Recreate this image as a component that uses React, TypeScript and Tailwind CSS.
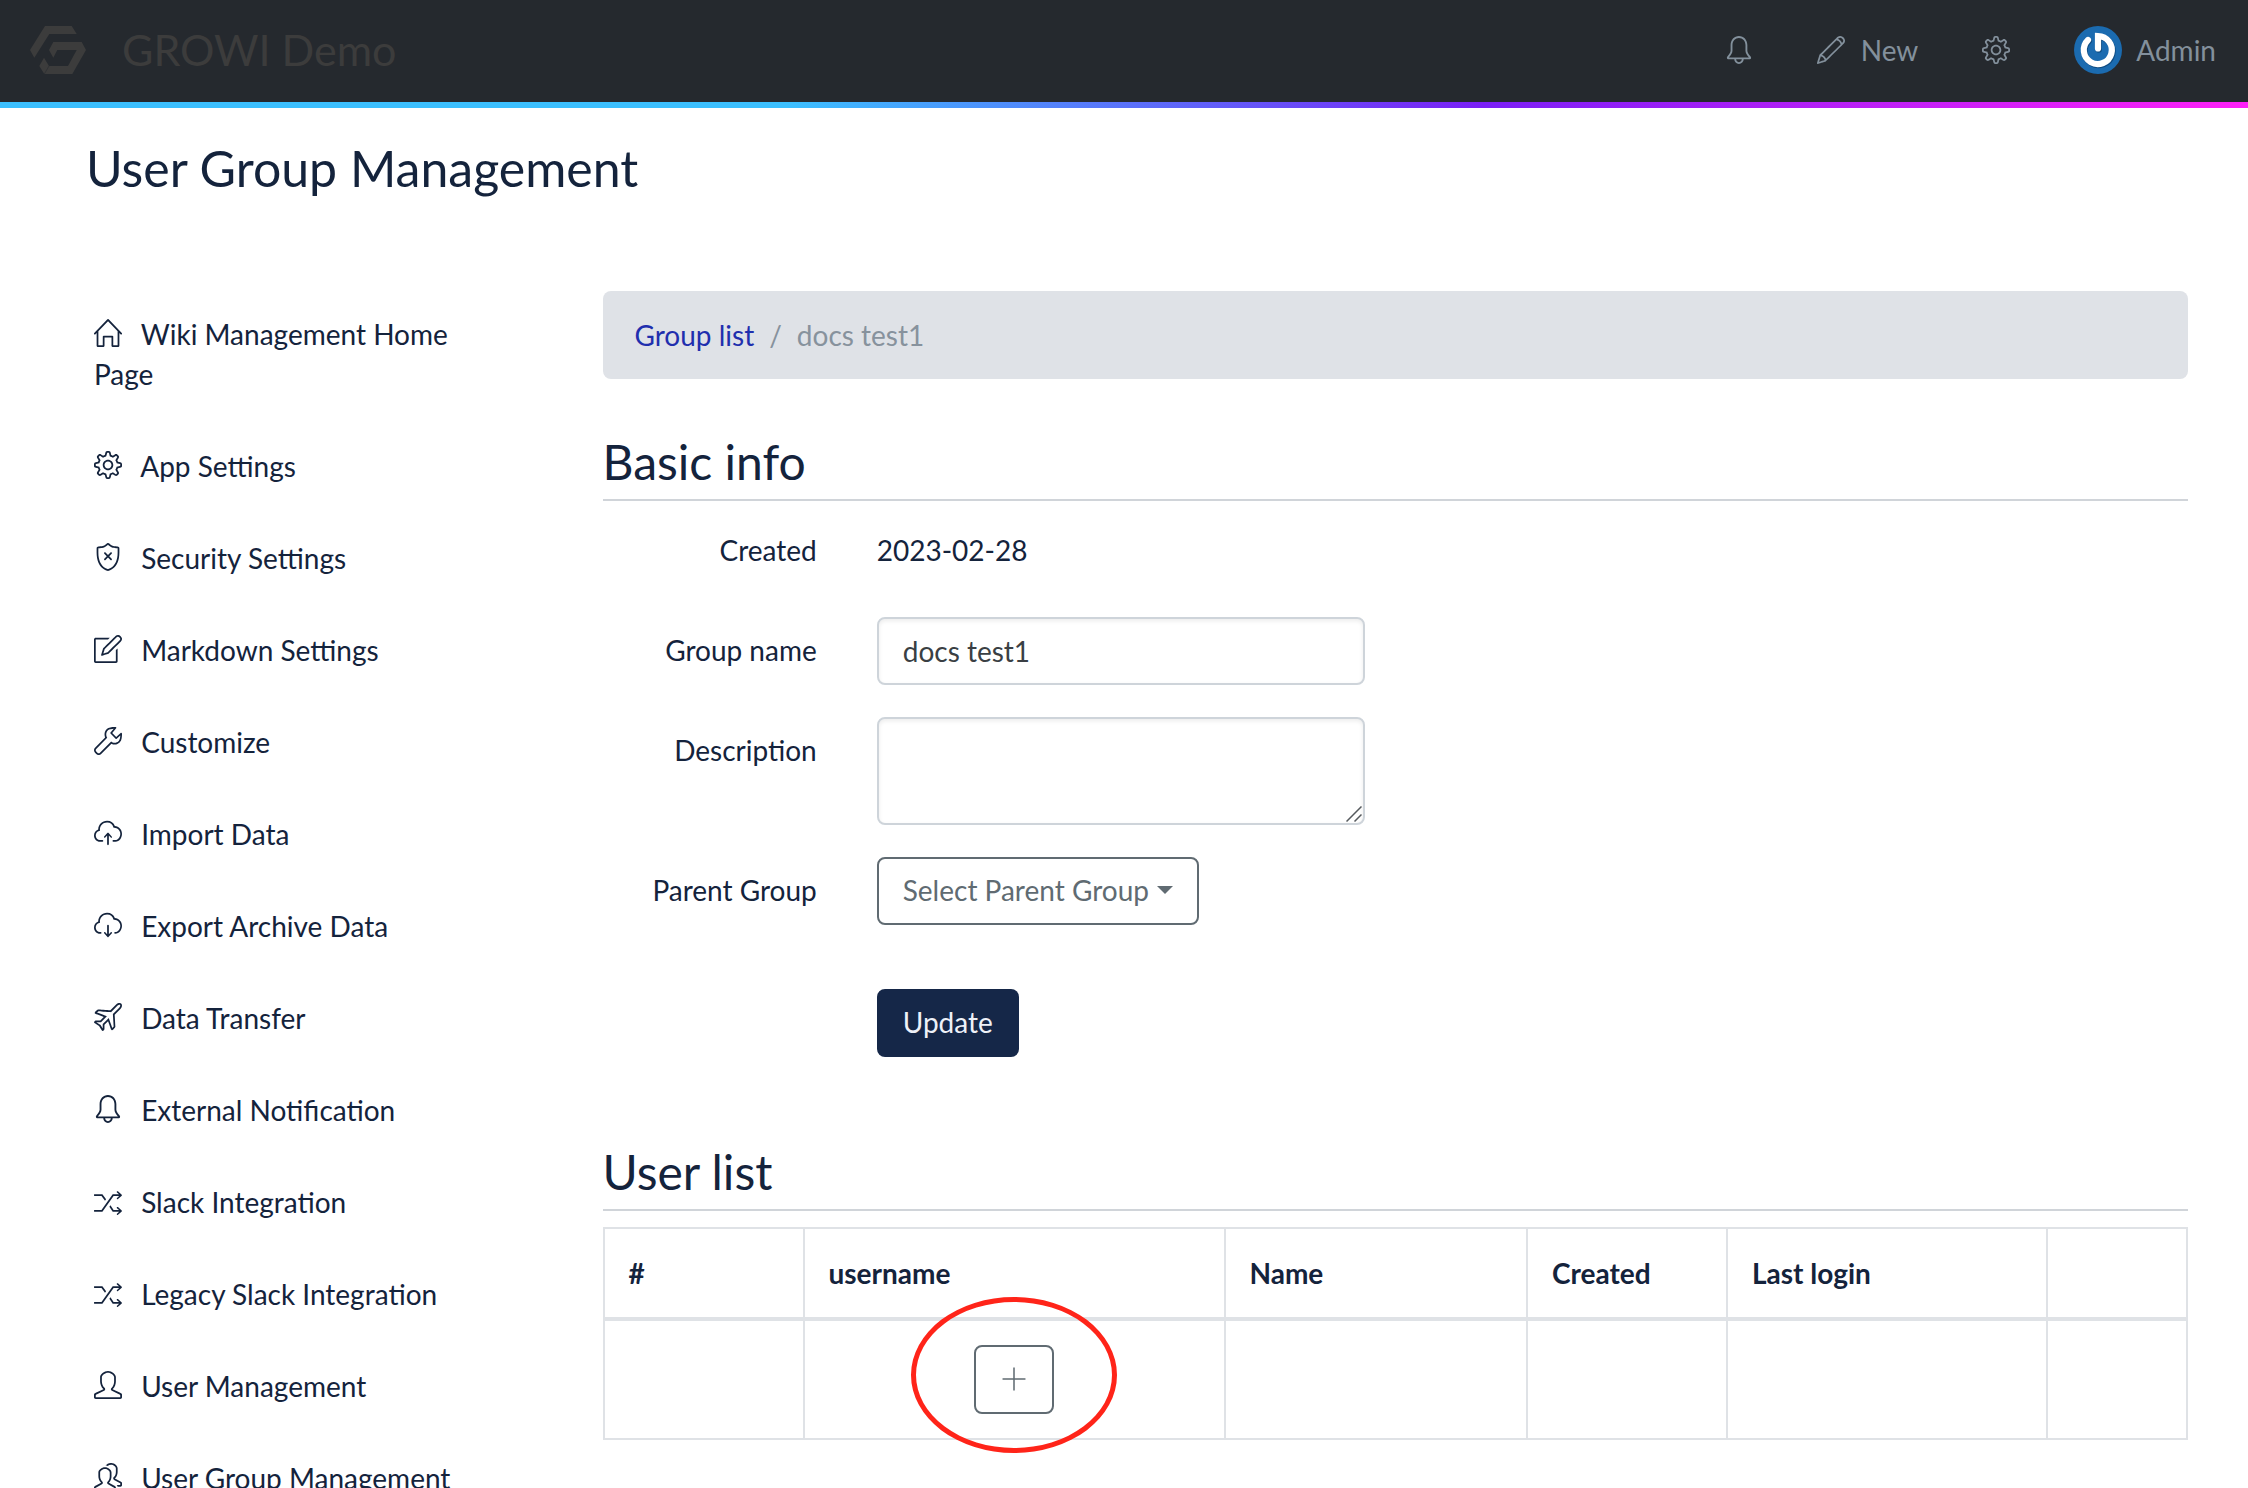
import type { ReactNode } from "react";
import type { IconType } from "react-icons";
import {
  SlBell,
  SlCloudDownload,
  SlCloudUpload,
  SlHome,
  SlNote,
  SlPencil,
  SlPeople,
  SlPlane,
  SlSettings,
  SlShield,
  SlShuffle,
  SlUser,
  SlWrench,
} from "react-icons/sl";
import { TfiPlus } from "react-icons/tfi";

const menu: { icon: IconType; label: string }[] = [
  { icon: SlHome, label: "Wiki Management Home Page" },
  { icon: SlSettings, label: "App Settings" },
  { icon: SlShield, label: "Security Settings" },
  { icon: SlNote, label: "Markdown Settings" },
  { icon: SlWrench, label: "Customize" },
  { icon: SlCloudUpload, label: "Import Data" },
  { icon: SlCloudDownload, label: "Export Archive Data" },
  { icon: SlPlane, label: "Data Transfer" },
  { icon: SlBell, label: "External Notification" },
  { icon: SlShuffle, label: "Slack Integration" },
  { icon: SlShuffle, label: "Legacy Slack Integration" },
  { icon: SlUser, label: "User Management" },
  { icon: SlPeople, label: "User Group Management" },
];

const columns: { label: string; width: string }[] = [
  { label: "#", width: "w-[200px]" },
  { label: "username", width: "w-[421px]" },
  { label: "Name", width: "" },
  { label: "Created", width: "w-[200px]" },
  { label: "Last login", width: "w-[320px]" },
  { label: "", width: "w-[140px]" },
];

function Logo() {
  return (
    <svg viewBox="0 0 56 48" className="h-12 w-14 fill-[#3c3c3c]" aria-hidden="true">
      <path d="M15 0H41.700L46.700 8H19.300L4.300 31.700L0 24Z" />
      <path d="M23.300 16H51.700L56 24L42.300 48H14.300L9.300 40L14 31.700L19 40H38L46.700 24H27.300L23.300 31.700L19 24Z" />
      <path d="M14.300 48L19 40" className="stroke-[#25292e]" strokeWidth="0.500" />
    </svg>
  );
}

function Avatar() {
  return (
    <svg viewBox="0 0 48 48" className="size-12" aria-hidden="true">
      <circle cx="24" cy="24" r="24" fill="#1b6bb0" />
      <g fill="none" strokeLinecap="round">
        <path d="M14 14A14 14 0 1 0 24 10V22.500" transform="translate(0.700 1)" stroke="#0f4c82" strokeWidth="6.500" />
        <path d="M14 14A14 14 0 1 0 24 10V22.500" stroke="#ffffff" strokeWidth="6.200" />
      </g>
    </svg>
  );
}

function Header() {
  return (
    <header>
      <div className="flex h-[102px] items-center bg-[#25292e] pr-8 pb-0.5 pl-[30px] text-[#83909c]">
        <a href="#home" className="flex items-center gap-9 text-[#3c3c3c]">
          <Logo />
          <span className="text-[43px] leading-[52px]">GROWI Demo</span>
        </a>
        <nav className="ml-auto flex items-center gap-16">
          <button type="button" aria-label="Notifications">
            <SlBell className="size-7" />
          </button>
          <button type="button" className="flex items-center gap-4">
            <SlPencil className="size-7" />
            New
          </button>
          <a href="#admin" aria-label="Settings">
            <SlSettings className="size-7" />
          </a>
          <button type="button" className="flex items-center gap-3.5">
            <Avatar />
            Admin
          </button>
        </nav>
      </div>
      <div className="h-1.5 bg-[linear-gradient(90deg,#3cc0ff_0%,#3cc0ff_35%,#7a1ff5_66%,#ff20f8_100%)]" />
    </header>
  );
}

function Sidebar() {
  return (
    <nav className="px-[42px]">
      <ul>
        {menu.map(({ icon: Icon, label }) => (
          <li key={label}>
            <a href="#menu" className="block px-7 py-[26px]">
              <Icon className="mr-3 inline size-7 align-[-2px]" /> {label}
            </a>
          </li>
        ))}
      </ul>
    </nav>
  );
}

function SectionTitle({ children }: { children: ReactNode }) {
  return (
    <h2 className="border-b-2 border-[#d0d4d9] pb-[7px] text-[48px] leading-[60px]">{children}</h2>
  );
}

function Row({ label, htmlFor, children }: { label: string; htmlFor?: string; children: ReactNode }) {
  return (
    <div className="-mx-[30px] flex">
      <div className="w-1/6 shrink-0 px-[30px] pt-[13px] text-right whitespace-nowrap">
        {htmlFor ? <label htmlFor={htmlFor}>{label}</label> : label}
      </div>
      <div className="w-1/3 px-[30px]">{children}</div>
    </div>
  );
}

function BasicInfo() {
  const box =
    "block w-full rounded-lg border-2 border-[#ced4da] bg-white px-6 py-3 text-[#3a3f44] shadow-[inset_0_2px_4px_rgba(0,0,0,0.08)]";
  return (
    <form className="mt-4 flex flex-col gap-8">
      <Row label="Created">
        <p className="h-[68px] pt-[13px]">2023-02-28</p>
      </Row>
      <Row label="Group name" htmlFor="group-name">
        <input id="group-name" type="text" defaultValue="docs test1" className={box + " h-[68px]"} />
      </Row>
      <Row label="Description" htmlFor="description">
        <div className="relative">
          <textarea id="description" className={box + " h-[108px] resize-none"} />
          <svg
            viewBox="0 0 16 16"
            className="pointer-events-none absolute right-[3px] bottom-[3px] size-4 stroke-[#55595d]"
            strokeWidth="1.500"
            aria-hidden="true"
          >
            <path d="M0.500 15.500L15.500 0.500M8.500 15.500L15.500 8.500" />
          </svg>
        </div>
      </Row>
      <Row label="Parent Group" htmlFor="parent-group">
        <button
          id="parent-group"
          type="button"
          aria-haspopup="menu"
          className="flex h-[68px] items-center gap-2 rounded-lg border-2 border-[#606b72] px-6 pb-0.5 whitespace-nowrap text-[#606b72]"
        >
          Select Parent Group
          <svg viewBox="0 0 16 8" className="h-2 w-4 fill-current" aria-hidden="true">
            <path d="M0 0H16L8 8Z" />
          </svg>
        </button>
      </Row>
      <div className="-mx-[30px] mt-8 flex">
        <div className="ml-[16.6667%] px-[30px]">
          <button type="submit" className="h-[68px] rounded-lg bg-[#152748] px-[26px] pb-0.5 text-[#eef1f8]">
            Update
          </button>
        </div>
      </div>
    </form>
  );
}

function UserTable() {
  return (
    <table className="mt-4 w-full table-fixed border-collapse border-2 border-[#dfe2e6]">
      <thead>
        <tr>
          {columns.map(({ label, width }) => (
            <th
              key={label}
              className={"h-[91px] border-2 border-b-4 border-[#dfe2e6] px-6 text-left font-bold " + width}
            >
              {label}
            </th>
          ))}
        </tr>
      </thead>
      <tbody>
        <tr>
          {columns.map(({ label }) => (
            <td key={label} className="border-2 border-[#dfe2e6] p-6">
              {label === "username" && (
                <div className="relative mx-auto w-20">
                  <button
                    type="button"
                    aria-label="Add user"
                    className="flex h-[69px] w-20 items-center justify-center rounded-lg border-2 border-[#606b72] pb-0.5 text-[#606b72]"
                  >
                    <TfiPlus className="size-[26px]" />
                  </button>
                  <div className="pointer-events-none absolute -top-12 left-1/2 h-[156px] w-[206px] -translate-x-1/2 rounded-[50%] border-5 border-[#ff2419]" />
                </div>
              )}
            </td>
          ))}
        </tr>
      </tbody>
    </table>
  );
}

export default function App() {
  return (
    <div className="h-screen overflow-hidden bg-white font-['Lato',sans-serif] text-[28px] leading-[40px] text-[#14233c]">
      <Header />
      <h1 className="mt-[30px] px-[86px] text-[50px] leading-[60px]">User Group Management</h1>
      <div className="mt-[93px] flex pr-[30px] pl-6">
        <div className="-mt-[3px] w-1/4 shrink-0">
          <Sidebar />
        </div>
        <main className="min-w-0 flex-1 px-[30px]">
          <nav aria-label="Breadcrumb" className="rounded-lg bg-[#dfe2e7] px-8 py-6">
            <ol className="flex">
              <li>
                <a href="#groups" className="text-[#1f2fae]">
                  Group list
                </a>
              </li>
              <li className="px-[15px] text-[#87929d]">/</li>
              <li className="text-[#87929d]">docs test1</li>
            </ol>
          </nav>
          <div className="mt-[53px]">
            <SectionTitle>Basic info</SectionTitle>
            <BasicInfo />
          </div>
          <div className="mt-[85px]">
            <SectionTitle>User list</SectionTitle>
            <UserTable />
          </div>
        </main>
      </div>
    </div>
  );
}
